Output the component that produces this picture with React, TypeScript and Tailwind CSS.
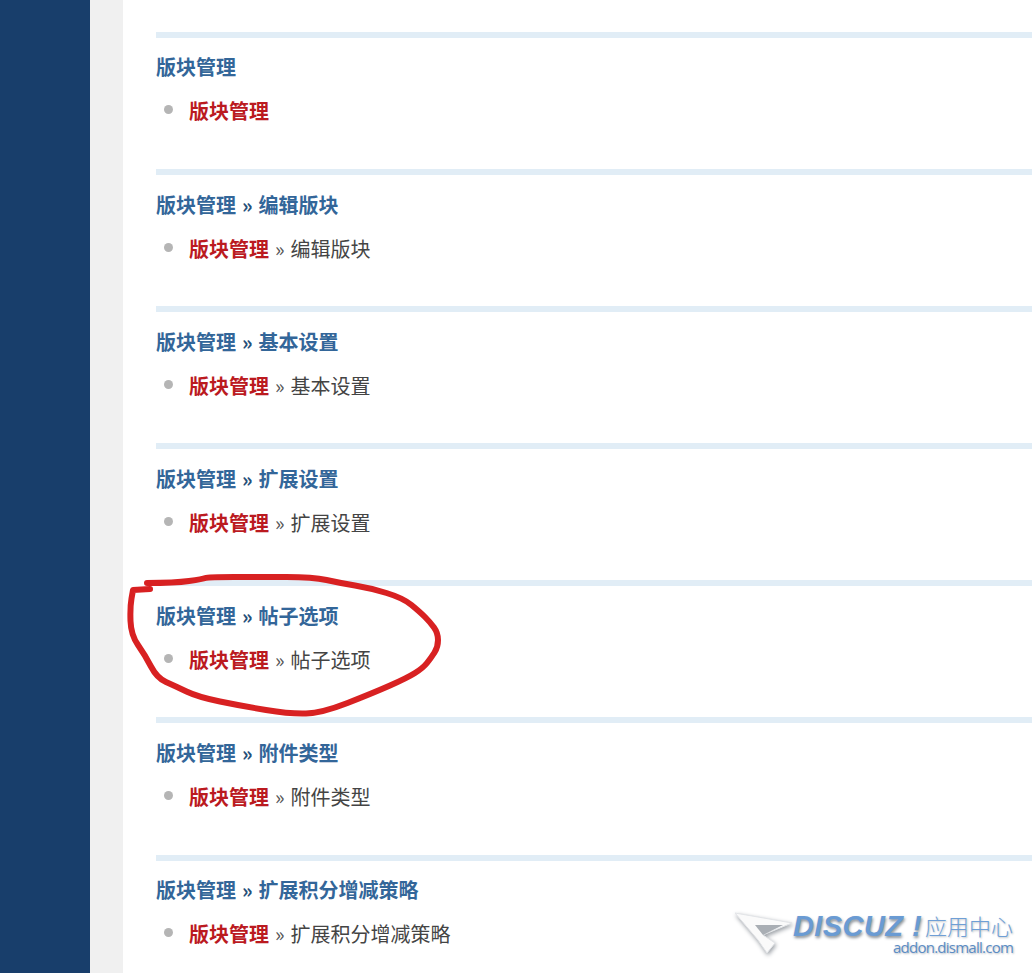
const SECTIONS = ['', '编辑版块', '基本设置', '扩展设置', '帖子选项', '附件类型', '扩展积分增减策略'];

const CIRCLE_POINTS: Array<[number, number]> = [
  [147, 583], [175, 583], [203, 579], [208, 577], [260, 577], [313, 577], [340, 583], [370, 588],
  [403, 598], [420, 612], [430, 622], [438, 633], [438, 647], [431, 658], [423, 668], [407, 678],
  [373, 693], [322, 713], [290, 714], [242, 706], [198, 697], [175, 686], [157, 678], [145, 655],
  [131, 635], [130, 607], [133, 590], [133, 590], [150, 589],
];

// smooths the marker line a little, the corners stay visible
function circlePath() {
  let d = `M${CIRCLE_POINTS[0][0]} ${CIRCLE_POINTS[0][1]}`;
  for (let i = 1; i < CIRCLE_POINTS.length - 1; i++) {
    const p = CIRCLE_POINTS[i];
    const next = CIRCLE_POINTS[i + 1];
    d += ` Q${p[0]} ${p[1]} ${(p[0] + next[0]) / 2} ${(p[1] + next[1]) / 2}`;
  }
  const last = CIRCLE_POINTS[CIRCLE_POINTS.length - 1];
  return `${d} L${last[0]} ${last[1]}`;
}

function Section({ name }: { name: string }) {
  return (
    <div className="h-[137px] border-t-[6px] border-[#e1edf6] pt-[15px] first:pt-[14px] last:mt-px last:pt-[14px]">
      <h3 className="flex text-[20px] leading-[30px] font-bold text-[#336699]">
        版块管理
        {name && (
          <>
            <span className="mx-[6px] text-[#264e78]">»</span>
            {name}
          </>
        )}
      </h3>
      <div className="mt-[14px] flex items-center text-[20px] leading-[30px]">
        <span className="mb-[4px] ml-2 h-[9px] w-[9px] rounded-full bg-[#b5b5b5]" />
        <span className="ml-4 font-bold text-[#bb1a1f]">版块管理</span>
        {name && (
          <>
            <span className="mx-[6px] text-[#555555]">»</span>
            <span className="text-[#444444]">{name}</span>
          </>
        )}
      </div>
    </div>
  );
}

function Watermark() {
  return (
    <div className="absolute left-[735px] top-[908px] h-[60px] w-[290px]">
      <svg
        className="absolute left-0 top-0 [filter:drop-shadow(1px_2px_2px_#9a9fa5)]"
        width="60"
        height="50"
        viewBox="0 0 60 50"
      >
        <path d="M0 5 L57 15 L28 27 L40 35 L32 45 L23 32 Z" fill="#fafafa" stroke="#e3e5e8" strokeWidth="1" />
        <path d="M20 17 L48 17 L28 27 Z" fill="#a9aeb4" />
      </svg>
      <span className="absolute left-[58px] top-[7px] font-['Liberation_Sans',sans-serif] text-[29px] leading-[22px] font-bold italic tracking-[0.4px] text-[#6a9bd3] [text-shadow:1px_2px_3px_#8a9097]">
        DISCUZ
      </span>
      <span className="absolute left-[177px] top-[7px] font-['Liberation_Sans',sans-serif] text-[29px] leading-[22px] font-bold italic text-[#6a9bd3] [text-shadow:1px_2px_3px_#8a9097]">
        !
      </span>
      <span className="absolute left-[190px] top-[5px] text-[22px] leading-[24px] font-light text-[#6f9fd6] [text-shadow:1px_1px_2px_#b7bcc2]">
        应用中心
      </span>
      <span className="absolute left-[158px] top-[31px] font-['Open_Sans',sans-serif] text-[15px] leading-[16px] tracking-[-0.75px] text-[#5b8cc4] [text-shadow:1px_1px_2px_#b7bcc2]">
        addon.dismall.com
      </span>
    </div>
  );
}

export default function App() {
  return (
    <div className="relative flex h-[973px] overflow-hidden bg-white font-['Noto_Sans_CJK_SC','Liberation_Sans',sans-serif]">
      <div className="w-[90px] shrink-0 bg-[#183e6b]" />
      <div className="w-[33px] shrink-0 bg-[#f0f0f0]" />
      <div className="flex-1 pl-[33px] pt-[32px]">
        {SECTIONS.map((name) => (
          <Section key={name} name={name} />
        ))}
      </div>
      <svg className="pointer-events-none absolute left-0 top-0" width="1032" height="973" viewBox="0 0 1032 973">
        <path d={circlePath()} fill="none" stroke="#d82122" strokeWidth="6" strokeLinejoin="round" strokeLinecap="round" />
      </svg>
      <Watermark />
    </div>
  );
}
